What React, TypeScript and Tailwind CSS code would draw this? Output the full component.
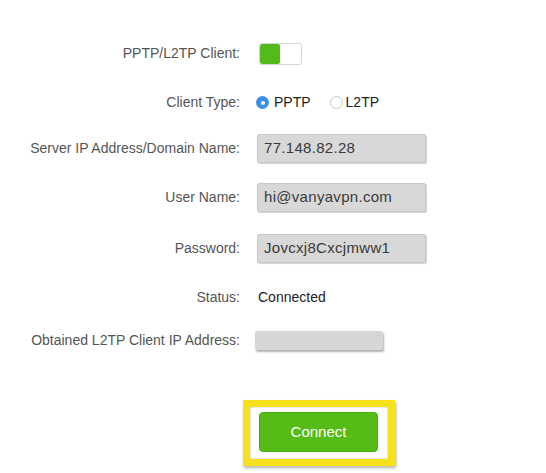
import { useState } from "react";

const FONT = { fontFamily: '"Liberation Sans", Arial, Helvetica, sans-serif' };

function Label({ children }: { children: React.ReactNode }) {
  return (
    <div className="w-[240px] shrink-0 text-right text-[14px] text-[#555]">{children}</div>
  );
}

function Field({ value }: { value: string }) {
  return (
    <div className="flex h-[29px] w-[169px] items-center rounded-[2px] border border-[#c8c8c8] bg-[#d8d8d8] pl-[6px] text-[15px] tracking-[0.3px] text-[#3a3a3a] shadow-[1px_1px_1px_rgba(0,0,0,0.18)]">
      {value}
    </div>
  );
}

function Radio({ checked }: { checked: boolean }) {
  return checked ? (
    <span className="flex h-[13px] w-[13px] items-center justify-center rounded-full bg-[#3d8ee8]">
      <span className="h-[4px] w-[4px] rounded-full bg-white" />
    </span>
  ) : (
    <span className="h-[13px] w-[13px] rounded-full border border-[#c9c9c9] bg-white" />
  );
}

export default function App() {
  const [enabled] = useState(true);
  const [type, setType] = useState<"pptp" | "l2tp">("pptp");

  return (
    <div className="h-[473px] w-[546px] overflow-hidden bg-white" style={FONT}>
      <div className="flex flex-col pt-[43px]">
        {/* Client toggle */}
        <div className="flex h-[21px] items-center gap-[18px]">
          <Label>PPTP/L2TP Client:</Label>
          <div className="ml-[1px] flex h-[22px] w-[43px] overflow-hidden rounded-[3px] border border-[#d3d7dc] bg-white">
            {enabled && <div className="h-full w-[20px] rounded-[2px] bg-[#52bb1a]" />}
          </div>
        </div>

        {/* Client type */}
        <div className="mt-[28px] flex h-[21px] items-center gap-[16px]">
          <Label>Client Type:</Label>
          <div className="flex items-center text-[14px] text-[#222]">
            <button type="button" onClick={() => setType("pptp")} className="flex items-center gap-[5px]">
              <Radio checked={type === "pptp"} />
              PPTP
            </button>
            <button type="button" onClick={() => setType("l2tp")} className="ml-[19px] flex items-center gap-[3px]">
              <Radio checked={type === "l2tp"} />
              L2TP
            </button>
          </div>
        </div>

        <div className="mt-[21px] flex items-center gap-[17px]">
          <Label>Server IP Address/Domain Name:</Label>
          <Field value="77.148.82.28" />
        </div>

        <div className="mt-[20px] flex items-center gap-[17px]">
          <Label>User Name:</Label>
          <Field value="hi@vanyavpn.com" />
        </div>

        <div className="mt-[22px] flex items-center gap-[17px]">
          <Label>Password:</Label>
          <Field value="Jovcxj8Cxcjmww1" />
        </div>

        <div className="mt-[24px] flex h-[21px] items-center gap-[18px]">
          <Label>Status:</Label>
          <span className="text-[14px] text-[#222]">Connected</span>
        </div>

        <div className="mt-[23px] flex h-[19px] items-center gap-[15px]">
          <Label>Obtained L2TP Client IP Address:</Label>
          <div className="h-[19px] w-[128px] rounded-[2px] bg-[#d6d6d6] shadow-[1px_2px_2px_rgba(0,0,0,0.3)]" />
        </div>

        {/* Connect, highlighted */}
        <div className="ml-[243px] mt-[50px] h-[66px] w-[152px] border-[7px] border-[#f5e21c] bg-white pl-[9px] pt-[5px] shadow-[1px_2px_3px_rgba(0,0,0,0.3),inset_0_0_2px_rgba(0,0,0,0.35)]">
          <button
            type="button"
            className="flex h-[40px] w-[119px] items-center justify-center rounded-[4px] border border-[#4aa814] bg-[#55bb17] text-[15px] text-white"
          >
            Connect
          </button>
        </div>
      </div>
    </div>
  );
}
